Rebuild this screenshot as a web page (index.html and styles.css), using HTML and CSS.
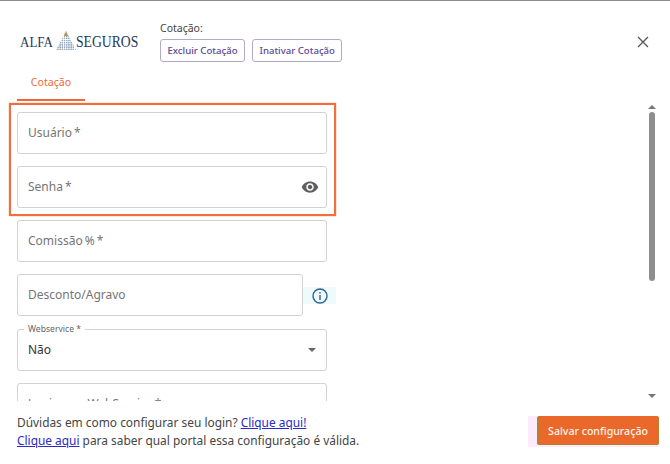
FILE: index.html
```html
<!DOCTYPE html>
<html lang="pt-BR">
<head>
<meta charset="utf-8">
<title>Cotação</title>
<link rel="stylesheet" href="styles.css">
</head>
<body>
<div class="dialog">
  <header class="header">
    <div class="logo">
      <span class="logo-word logo-alfa">ALFA</span>
      <svg class="logo-mark" width="22" height="21" viewBox="0 0 22 21">
        <defs>
          <pattern id="dots" width="2.2" height="2.2" patternUnits="userSpaceOnUse">
            <rect width="1.5" height="1.5" fill="#93a7bb"/>
          </pattern>
        </defs>
        <polygon points="11,0 21,19 1,19" fill="url(#dots)"/>
        <polygon points="11,0 13,5 9,5" fill="#b8954f"/>
      </svg>
      <span class="logo-word">SEGUROS</span>
    </div>
    <div class="actions">
      <div class="actions-title">Cotação:</div>
      <div class="actions-row">
        <button class="btn-outline">Excluir Cotação</button>
        <button class="btn-outline">Inativar Cotação</button>
      </div>
    </div>
    <svg class="close" width="14" height="14" viewBox="0 0 14 14"><path d="M2 2L12 12M12 2L2 12" stroke="#555" stroke-width="1.3" fill="none"/></svg>
  </header>
  <nav class="tabs"><div class="tab">Cotação</div></nav>
  <main class="body">
    <div class="scroll">
      <div class="form">
        <div class="field"><span class="placeholder">Usuário *</span></div>
        <div class="field"><span class="placeholder">Senha *</span>
          <svg class="eye" width="18" height="18" viewBox="0 0 24 24"><path fill="#5f5f5f" d="M12 4.5C7 4.5 2.73 7.61 1 12c1.73 4.39 6 7.5 11 7.5s9.27-3.11 11-7.5c-1.73-4.39-6-7.5-11-7.5zM12 17c-2.76 0-5-2.24-5-5s2.24-5 5-5 5 2.24 5 5-2.24 5-5 5zm0-8c-1.66 0-3 1.34-3 3s1.34 3 3 3 3-1.34 3-3-1.34-3-3-3z"/></svg>
        </div>
        <div class="field"><span class="placeholder">Comissão % *</span></div>
        <div class="field-row">
          <div class="field grow"><span class="placeholder">Desconto/Agravo</span></div>
          <div class="info">
            <svg width="18" height="18" viewBox="0 0 18 18"><circle cx="9" cy="9" r="7" fill="none" stroke="#2c6390" stroke-width="1.4"/><rect x="8.3" y="8" width="1.4" height="5" fill="#2c6390"/><rect x="8.3" y="5" width="1.4" height="1.5" fill="#2c6390"/></svg>
          </div>
        </div>
        <div class="field">
          <span class="legend">Webservice *</span>
          <span class="value">Não</span>
          <span class="caret"></span>
        </div>
        <div class="field">
          <span class="placeholder">Logins em WebService *</span>
        </div>
      </div>
      <div class="scrollbar">
        <span class="arrow-up"></span>
        <span class="thumb"></span>
        <span class="arrow-down"></span>
      </div>
    </div>
    <div class="highlight"></div>
  </main>
  <footer class="footer">
    <div class="help">
      <div>Dúvidas em como configurar seu login? <a href="#">Clique aqui!</a></div>
      <div><a href="#">Clique aqui</a> para saber qual portal essa configuração é válida.</div>
    </div>
    <div class="save-glow"><button class="btn-save">Salvar configuração</button></div>
  </footer>
</div>
</body>
</html>
```
FILE: styles.css
```css
* { box-sizing: border-box; }
html, body { margin: 0; height: 100%; background: #fff; }
body { font-family: "Noto Sans", "Open Sans", sans-serif; color: #444; overflow: hidden; }
.dialog { width: 670px; height: 464px; border-top: 1px solid #8c8c8c; display: flex; flex-direction: column; }

.header { height: 69px; padding: 19px 20px 0 20px; display: flex; align-items: flex-start; flex: none; }
.logo { width: 140px; height: 44px; display: flex; align-items: flex-end; padding-bottom: 13px; }
.logo-word { font-family: "Liberation Serif", serif; font-size: 13.7px; line-height: 16px; color: #1f3a5c; transform: scaleY(1.2); transform-origin: 50% 80%; }
.logo-alfa { font-size: 13px; }
.logo-mark { margin: 0 -1px -1px 2px; flex: none; }
.actions { display: flex; flex-direction: column; }
.actions-title { font-size: 10.5px; line-height: 16px; color: #444; }
.actions-row { display: flex; gap: 7px; margin-top: 3px; }
.btn-outline { height: 23px; padding: 0 6.5px; font: 500 9.6px "Noto Sans", sans-serif; color: #5b4694; background: #fff; border: 1px solid #b3a9cc; border-radius: 3px; white-space: nowrap; }
.close { margin: 15px 0 0 auto; flex: none; }

.tabs { height: 31px; padding-left: 17px; flex: none; }
.tab { width: 68px; height: 31px; border-bottom: 2px solid #f0683a; color: #f0683a; font-size: 10.6px; line-height: 24px; text-align: center; }

.body { position: relative; height: 300px; flex: none; }
.scroll { height: 100%; overflow: hidden; display: flex; justify-content: space-between; padding: 11px 12px 0 17px; }
.form { width: 310px; display: flex; flex-direction: column; gap: 12px; flex: none; }
.field { position: relative; height: 42px; flex: none; border: 1px solid #d2d2d2; border-radius: 3px; display: flex; align-items: center; padding: 0 10px; background: #fff; }
.placeholder { font-size: 12px; color: #757575; line-height: 16px; word-spacing: -1px; }
.eye { position: absolute; right: 7px; top: 11px; }
.field-row { display: flex; height: 42px; flex: none; margin-bottom: 1px; }
.grow { flex: 1; }
.info { width: 33px; height: 17px; margin: 13px -9px 0 0; display: flex; align-items: center; justify-content: center; background: #eefafc; flex: none; }
.legend { position: absolute; left: 6px; top: -7px; padding: 0 4px; font-size: 8.6px; line-height: 12px; background: #fff; color: #666; }
.value { font-size: 12px; color: #333; margin-top: -2px; }
.caret { position: absolute; right: 10px; top: 18px; border: 4px solid transparent; border-top: 4px solid #666; border-bottom: 0; }

.scrollbar { width: 12px; height: 299px; margin-top: -9px; display: flex; flex-direction: column; align-items: center; }
.arrow-up { border: 4px solid transparent; border-bottom: 4px solid #777; border-top: 0; margin-top: 2px; }
.thumb { width: 6px; height: 169px; margin-top: 3px; background: #8e8e8e; border-radius: 3px; }
.arrow-down { border: 4px solid transparent; border-top: 4px solid #777; border-bottom: 0; margin-top: auto; margin-bottom: 4px; }

.highlight { position: absolute; left: 9px; top: 2px; width: 327px; height: 113px; border: 2px solid #f26f3c; box-shadow: 0 0 1px #f26f3c; pointer-events: none; }

.footer { flex: 1; display: flex; justify-content: space-between; align-items: flex-start; padding: 12px 11px 0 17px; background: #fff; }
.help { font-size: 11.9px; line-height: 18px; color: #444; }
.help a { color: #2a2ac8; }
.save-glow { background: #fdeafd; padding: 0 0 2px 9px; margin-top: 3px; display: flex; }
.btn-save { width: 122px; height: 29px; border: 0; border-radius: 3px; background: #e9682a; box-shadow: inset 3px 0 0 #b9812c, inset -1px 0 0 #b9812c, inset 0 -1px 0 #b9812c; color: #fff3ea; font: 500 10.6px "Noto Sans", sans-serif; }
```
